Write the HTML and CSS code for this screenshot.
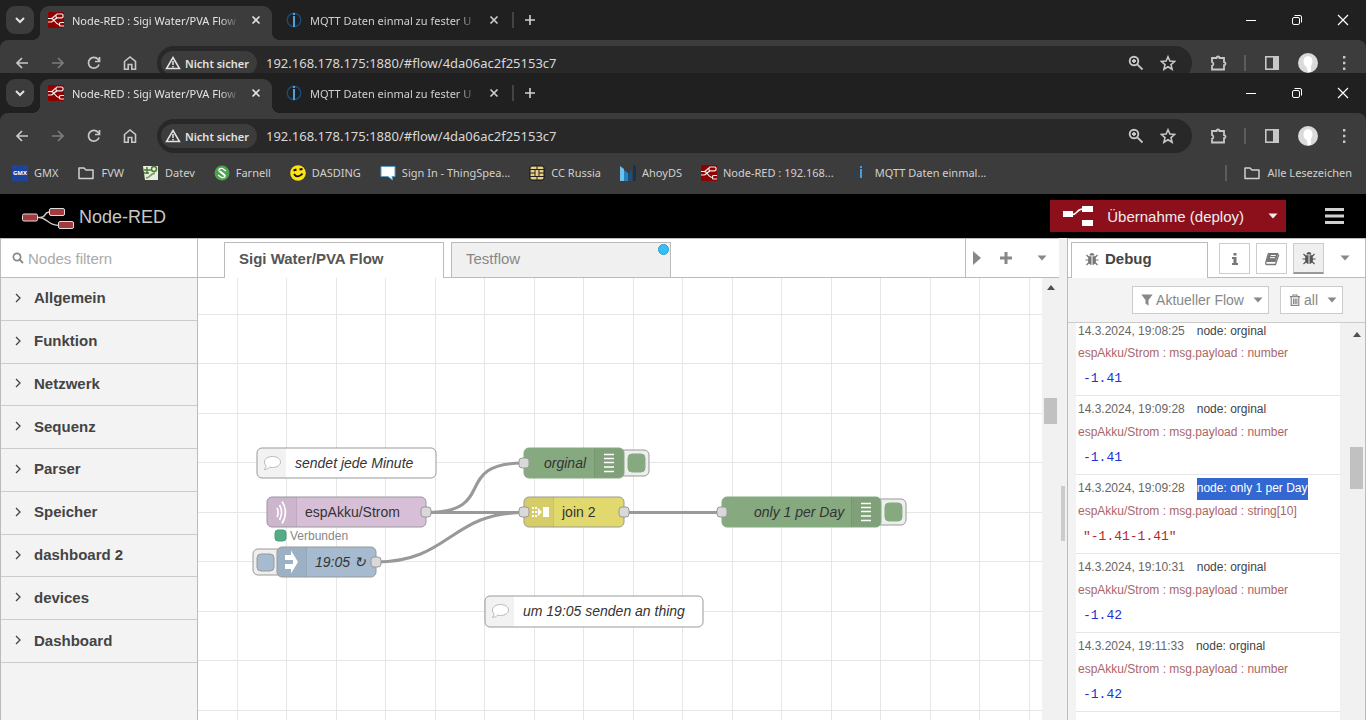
FILE: index.html
```html
<!DOCTYPE html>
<html lang="de">
<head>
    <meta charset="UTF-8">
    <meta name="viewport" content="width=device-width, initial-scale=1.0">
    <title>Node-RED : Sigi Water/PVA Flow</title>
    <link rel="stylesheet" href="styles.css">
</head>
<body>
    <!-- Icons -->
    <svg class="sprite" aria-hidden="true">
        <symbol id="i-down" viewBox="0 0 16 16"><path d="M4 6l4 4 4-4" fill="none" stroke="currentColor" stroke-width="2"/></symbol>
        <symbol id="i-close" viewBox="0 0 16 16"><path d="M4.500 4.500l7 7M11.500 4.500l-7 7" fill="none" stroke="currentColor" stroke-width="1.600"/></symbol>
        <symbol id="i-plus" viewBox="0 0 16 16"><path d="M8 3v10M3 8h10" fill="none" stroke="currentColor" stroke-width="1.600"/></symbol>
        <symbol id="i-nodered" viewBox="0 0 16 16"><rect width="16" height="16" rx="1" fill="#8f0000"/><path d="M0 6.500h3c3 0 2.500-3.500 6-3.500M3 6.500c4 0 4 6 8 6M0 10l3 0c2 0 3-3 6-3.800" fill="none" stroke="#eee" stroke-width="1.200"/><rect x="8" y="2" width="7" height="3.800" rx="1.200" fill="#8f0000" stroke="#eee" stroke-width="1.200"/><path d="M16 10.500h-3.500a1 1 0 0 0-1 1v1.500a1 1 0 0 0 1 1H16" fill="none" stroke="#eee" stroke-width="1.200"/></symbol>
        <symbol id="i-iobroker" viewBox="0 0 16 16"><circle cx="8" cy="8" r="6.800" fill="none" stroke="#1c4a78" stroke-width="1.400"/><rect x="7" y="4" width="2" height="11" fill="#4aa5df"/><rect x="7" y="1" width="2" height="2" fill="#4aa5df"/></symbol>
        <symbol id="i-back" viewBox="0 0 16 16"><path d="M14 8H3M8 3L3 8l5 5" fill="none" stroke="currentColor" stroke-width="1.700"/></symbol>
        <symbol id="i-forward" viewBox="0 0 16 16"><path d="M2 8h11M8 3l5 5-5 5" fill="none" stroke="currentColor" stroke-width="1.700"/></symbol>
        <symbol id="i-reload" viewBox="0 0 16 16"><path d="M13 9.500A5.400 5.400 0 1 1 12 4.300L13 5.500M13.500 2v4.500H9" fill="none" stroke="currentColor" stroke-width="1.700"/></symbol>
        <symbol id="i-home" viewBox="0 0 16 16"><path d="M2.500 6.500L8 2l5.500 4.500V14.200H9.800V9.500H6.200v4.700H2.500z" fill="none" stroke="currentColor" stroke-width="1.600"/></symbol>
        <symbol id="i-warn" viewBox="0 0 16 16"><path d="M8 2.500L14.500 13.500h-13z" fill="none" stroke="currentColor" stroke-width="1.500"/><path d="M8 6v4M8 11v1.500" stroke="currentColor" stroke-width="1.500"/></symbol>
        <symbol id="i-zoom" viewBox="0 0 16 16"><circle cx="6" cy="6" r="4.300" fill="none" stroke="currentColor" stroke-width="1.900"/><path d="M9.300 9.300L14.500 14.500M4 6h4M6 4v4" stroke="currentColor" stroke-width="1.800"/></symbol>
        <symbol id="i-star" viewBox="0 0 16 16"><path d="M8 1.800l1.900 4.300 4.700.4-3.600 3.100 1.100 4.600L8 11.700l-4.100 2.500L5 9.600 1.400 6.500l4.700-.4z" fill="none" stroke="currentColor" stroke-width="1.600"/></symbol>
        <symbol id="i-ext" viewBox="0 0 18 18"><path d="M3 4h4.500a1.500 1.500 0 0 1 3 0H15v4.200a1.500 1.500 0 0 1 0 3v4.300H3v-3.700a2 2 0 0 0 0-3.800z" fill="none" stroke="currentColor" stroke-width="1.800"/></symbol>
        <symbol id="i-panel" viewBox="0 0 16 16"><rect x="1.800" y="1.800" width="12.400" height="12.400" fill="none" stroke="currentColor" stroke-width="1.600"/><path d="M9 2h5v12H9z" fill="currentColor"/></symbol>
        <symbol id="i-avatar" viewBox="0 0 20 20"><circle cx="10" cy="10" r="10" fill="#dadada"/><ellipse cx="10" cy="8.500" rx="4.500" ry="5.500" fill="#fff"/><path d="M8 12h5l0 7-3 0z" fill="#fff"/></symbol>
        <symbol id="i-dots" viewBox="0 0 16 16"><path d="M7 1h2.400v2.400H7zM7 6.800h2.400v2.400H7zM7 12.600h2.400V15H7z" fill="currentColor"/></symbol>
        <symbol id="i-min" viewBox="0 0 12 12"><path d="M1 6.500h10" stroke="currentColor"/></symbol>
        <symbol id="i-restore" viewBox="0 0 12 12"><rect x="1.500" y="3.500" width="7" height="7" rx="1.500" fill="none" stroke="currentColor"/><path d="M3.500 1.500H9A1.500 1.500 0 0 1 10.500 3v5.500" fill="none" stroke="currentColor"/></symbol>
        <symbol id="i-x" viewBox="0 0 12 12"><path d="M1 1l10 10M11 1L1 11" stroke="currentColor" stroke-width="1.200"/></symbol>
        <symbol id="i-folder" viewBox="0 0 18 16"><path d="M2 3h5l2 2h7v8.500H2z" fill="none" stroke="currentColor" stroke-width="1.500" stroke-linejoin="round"/></symbol>
        <symbol id="i-caret" viewBox="0 0 10 10"><path d="M.5 2.500h9L5 7.500z" fill="currentColor"/></symbol>
        <symbol id="i-bug" viewBox="0 0 14 14"><path d="M4.500 3.500a2.500 2.500 0 0 1 5 0z" fill="currentColor"/><path d="M3.500 4.200h3V13C4.300 12.700 3 11 3 8.500zM7.500 4.200h3l.5 4.300c0 2.500-1.300 4.200-3.500 4.500z" fill="currentColor"/><path d="M4 5.500L1.500 3M10 5.500L12.500 3M.5 8h3M10.500 8h3M4 10.500L1.500 13M10 10.500L12.500 13" stroke="currentColor" stroke-width="1.200"/></symbol>
        <symbol id="i-info" viewBox="0 0 14 14"><path d="M5.500 1h3v2.500h-3zM4 5h4.500v6H10v2H4v-2h1.500V7H4z" fill="currentColor"/></symbol>
        <symbol id="i-book" viewBox="0 0 16 14"><path d="M5 1h9.500l-3 9H2.200z" fill="currentColor"/><path d="M4.500 1L1.800 10.500c-.4 1.400.2 2 1.200 2h8.500L14.800 2.500" fill="none" stroke="currentColor" stroke-width="1.300"/><path d="M6.700 3.500h5M6 5.700h5" stroke="#fff"/></symbol>
        <symbol id="i-filter" viewBox="0 0 12 12"><path d="M.3.500h11.400L7.500 6v5.700L4.500 9.500V6z" fill="currentColor"/></symbol>
        <symbol id="i-trash" viewBox="0 0 12 12"><path d="M.8 2.700h10.400M4 2.500V1h4v1.500M2.200 3v8.300h7.600V3M4.500 4.500V10M6.200 4.500V10M7.900 4.500V10" fill="none" stroke="currentColor" stroke-width="1.200"/></symbol>
        <symbol id="i-search" viewBox="0 0 12 12"><circle cx="5" cy="5" r="3.600" fill="none" stroke="currentColor" stroke-width="1.700"/><path d="M7.600 7.600L11 11" stroke="currentColor" stroke-width="2"/></symbol>
        <symbol id="i-angle" viewBox="0 0 10 10"><path d="M3 1l4 4-4 4" fill="none" stroke="currentColor" stroke-width="1.300"/></symbol>
        <symbol id="i-comment" viewBox="0 0 20 20"><path d="M10.500 3.500c4.600 0 8 2.400 8 5.500s-3.400 5.500-8 5.500c-1 0-2-.1-2.900-.4C6.300 15.600 4.500 16.300 2 16.500c1.300-1 2-2 2.100-3.500-1-1-1.600-2.400-1.600-4 0-3.100 3.400-5.500 8-5.500z" fill="#fff" stroke="#bbb"/></symbol>
        <symbol id="i-lines" viewBox="0 0 12 20"><path d="M1 1.500h10M1 5.500h10M1 9.500h10M1 14h10M1 18.500h10" stroke="#fff" stroke-width="1.500"/></symbol>
    </svg>

    <!-- Hinteres Browserfenster -->
    <div class="browser browser-back">
        <div class="tabstrip">
            <button class="tab-search" aria-label="Tabs durchsuchen"><svg width="16" height="16"><use href="#i-down"/></svg></button>
            <div class="tab active">
                <svg width="16" height="16"><use href="#i-nodered"/></svg>
                <span class="tab-title">Node-RED : Sigi Water/PVA Flow</span>
                <button class="tab-close" aria-label="Tab schließen"><svg width="16" height="16"><use href="#i-close"/></svg></button>
            </div>
            <div class="tab">
                <svg width="16" height="16"><use href="#i-iobroker"/></svg>
                <span class="tab-title">MQTT Daten einmal zu fester U</span>
                <button class="tab-close" aria-label="Tab schließen"><svg width="16" height="16"><use href="#i-close"/></svg></button>
            </div>
            <span class="tab-divider"></span>
            <button class="new-tab" aria-label="Neuer Tab"><svg width="16" height="16"><use href="#i-plus"/></svg></button>
            <div class="window-buttons">
                <button aria-label="Minimieren"><svg width="12" height="12"><use href="#i-min"/></svg></button>
                <button aria-label="Verkleinern"><svg width="12" height="12"><use href="#i-restore"/></svg></button>
                <button aria-label="Schließen"><svg width="12" height="12"><use href="#i-x"/></svg></button>
            </div>
        </div>
        <div class="toolbar">
            <button aria-label="Zurück"><svg width="16" height="16"><use href="#i-back"/></svg></button>
            <button class="dim" aria-label="Vorwärts"><svg width="16" height="16"><use href="#i-forward"/></svg></button>
            <button aria-label="Neu laden"><svg width="16" height="16"><use href="#i-reload"/></svg></button>
            <button aria-label="Startseite"><svg width="16" height="16"><use href="#i-home"/></svg></button>
            <div class="omnibox">
                <button class="chip"><svg width="16" height="16"><use href="#i-warn"/></svg>Nicht sicher</button>
                <input type="text" aria-label="Adresse" value="192.168.178.175:1880/#flow/4da06ac2f25153c7">
                <button class="omni-button" aria-label="Zoom"><svg width="16" height="16"><use href="#i-zoom"/></svg></button>
                <button class="omni-button" aria-label="Lesezeichen"><svg width="16" height="16"><use href="#i-star"/></svg></button>
            </div>
            <button aria-label="Erweiterungen"><svg width="18" height="18"><use href="#i-ext"/></svg></button>
            <span class="toolbar-divider"></span>
            <button aria-label="Seitenleiste"><svg width="16" height="16"><use href="#i-panel"/></svg></button>
            <button aria-label="Profil"><svg width="20" height="20"><use href="#i-avatar"/></svg></button>
            <button aria-label="Menü"><svg width="16" height="16"><use href="#i-dots"/></svg></button>
        </div>
    </div>

    <!-- Vorderes Browserfenster -->
    <div class="browser">
        <div class="tabstrip">
            <button class="tab-search" aria-label="Tabs durchsuchen"><svg width="16" height="16"><use href="#i-down"/></svg></button>
            <div class="tab active">
                <svg width="16" height="16"><use href="#i-nodered"/></svg>
                <span class="tab-title">Node-RED : Sigi Water/PVA Flow</span>
                <button class="tab-close" aria-label="Tab schließen"><svg width="16" height="16"><use href="#i-close"/></svg></button>
            </div>
            <div class="tab">
                <svg width="16" height="16"><use href="#i-iobroker"/></svg>
                <span class="tab-title">MQTT Daten einmal zu fester U</span>
                <button class="tab-close" aria-label="Tab schließen"><svg width="16" height="16"><use href="#i-close"/></svg></button>
            </div>
            <span class="tab-divider"></span>
            <button class="new-tab" aria-label="Neuer Tab"><svg width="16" height="16"><use href="#i-plus"/></svg></button>
            <div class="window-buttons">
                <button aria-label="Minimieren"><svg width="12" height="12"><use href="#i-min"/></svg></button>
                <button aria-label="Verkleinern"><svg width="12" height="12"><use href="#i-restore"/></svg></button>
                <button aria-label="Schließen"><svg width="12" height="12"><use href="#i-x"/></svg></button>
            </div>
        </div>
        <div class="toolbar">
            <button aria-label="Zurück"><svg width="16" height="16"><use href="#i-back"/></svg></button>
            <button class="dim" aria-label="Vorwärts"><svg width="16" height="16"><use href="#i-forward"/></svg></button>
            <button aria-label="Neu laden"><svg width="16" height="16"><use href="#i-reload"/></svg></button>
            <button aria-label="Startseite"><svg width="16" height="16"><use href="#i-home"/></svg></button>
            <div class="omnibox">
                <button class="chip"><svg width="16" height="16"><use href="#i-warn"/></svg>Nicht sicher</button>
                <input type="text" aria-label="Adresse" value="192.168.178.175:1880/#flow/4da06ac2f25153c7">
                <button class="omni-button" aria-label="Zoom"><svg width="16" height="16"><use href="#i-zoom"/></svg></button>
                <button class="omni-button" aria-label="Lesezeichen"><svg width="16" height="16"><use href="#i-star"/></svg></button>
            </div>
            <button aria-label="Erweiterungen"><svg width="18" height="18"><use href="#i-ext"/></svg></button>
            <span class="toolbar-divider"></span>
            <button aria-label="Seitenleiste"><svg width="16" height="16"><use href="#i-panel"/></svg></button>
            <button aria-label="Profil"><svg width="20" height="20"><use href="#i-avatar"/></svg></button>
            <button aria-label="Menü"><svg width="16" height="16"><use href="#i-dots"/></svg></button>
        </div>
        <nav class="bookmarks">
            <a href="#"><span class="gmx">GMX</span>GMX</a>
            <a href="#"><svg width="18" height="16"><use href="#i-folder"/></svg>FVW</a>
            <a href="#"><svg width="16" height="16" viewBox="0 0 16 16"><path d="M0 1h15v14H2z" fill="#e9eee2"/><path d="M1 5h7M4 2v7M1 8h5" stroke="#4c7a35" stroke-width="1.500"/><circle cx="11" cy="4" r="2.500" fill="none" stroke="#4c7a35" stroke-width="1.500"/><path d="M3 13c4 0 4-4 9-5" stroke="#7da565" stroke-width="2" fill="none"/></svg>Datev</a>
            <a href="#"><svg width="16" height="16" viewBox="0 0 16 16"><circle cx="8" cy="8" r="7.500" fill="#4da24f"/><path d="M12 6L8.500 3.500C5 3 4 5 5.500 6.500l5 4M4 10l3.500 2.500c3.500.5 4.500-1.500 3-3L6 6" fill="none" stroke="#fff" stroke-width="1.300"/></svg>Farnell</a>
            <a href="#"><svg width="16" height="16" viewBox="0 0 16 16"><circle cx="8" cy="8" r="7.800" fill="#ffe312"/><path d="M3.500 5.500l3-1M9.500 4.500l3-.5" stroke="#111" stroke-width="2"/><path d="M4 9c2 3.500 6 3 8.500-.5" fill="none" stroke="#111" stroke-width="1.800"/></svg>DASDING</a>
            <a href="#"><svg width="16" height="16" viewBox="0 0 16 16"><path d="M1 1.500h14v10h-3l.5 3.500-4.500-3.500H1z" fill="#fff" stroke="#5b9fc0"/></svg>Sign In - ThingSpea...</a>
            <a href="#"><svg width="16" height="16" viewBox="0 0 16 16"><rect x="1" y="1" width="14" height="14" rx="2" fill="#e6cf85" stroke="#111"/><path d="M1 4.500h5v7H1M15 4.500h-5v7h5M1 8h5M10 8h5M6 4.500h4M6 11.500h4M8 1v3.500M8 11.500V15" fill="none" stroke="#222"/></svg>CC Russia</a>
            <a href="#"><svg width="16" height="16" viewBox="0 0 16 16"><path d="M0 1l4 3v12H0z" fill="#6fc0ee"/><path d="M4 5l4 3v8H4z" fill="#2c7fb8"/><path d="M8 9l4-5v12H8z" fill="#17507d"/><path d="M13 0l3 1v15h-3z" fill="#123552"/></svg>AhoyDS</a>
            <a href="#"><svg width="16" height="16"><use href="#i-nodered"/></svg>Node-RED : 192.168...</a>
            <a href="#"><svg width="16" height="16" viewBox="0 0 16 16"><circle cx="8" cy="8" r="7" fill="none" stroke="#24425f"/><path d="M7 4h2v9H7zM7 1h2v2H7z" fill="#3f9fdf"/></svg>MQTT Daten einmal...</a>
            <a href="#" class="all-bookmarks"><svg width="18" height="16"><use href="#i-folder"/></svg>Alle Lesezeichen</a>
        </nav>
    </div>

    <!-- Node-RED -->
    <header class="red-header">
        <svg class="red-logo" width="54" height="22" viewBox="0 0 54 22">
            <path d="M16 9.500h3C26 9.500 22 4 29 4M18 9.500c8 0 9 8 20 8" fill="none" stroke="#ccc" stroke-width="1.500"/>
            <g fill="#a33a3e" stroke="#ddd"><rect x="1.500" y="6" width="15" height="7" rx="1.500"/><rect x="28.500" y=".5" width="15" height="7" rx="1.500"/><rect x="37.500" y="13.500" width="15" height="7" rx="1.500"/></g>
        </svg>
        <span class="red-name">Node-RED</span>
        <button class="deploy">
            <svg width="30" height="20" viewBox="0 0 30 20"><path d="M0 5h10v6H0zM19 0h11v6H19zM19 14h11v6H19z" fill="#fff"/><path d="M9 8.500c6 0 4-5.500 11-5.500" fill="none" stroke="#fff" stroke-width="1.500"/></svg>
            <span>Übernahme (deploy)</span>
            <svg class="deploy-caret" width="10" height="10"><use href="#i-caret"/></svg>
        </button>
        <button class="main-menu" aria-label="Hauptmenü"><svg width="19" height="16" viewBox="0 0 19 16"><path d="M0 1.500h19M0 8h19M0 14.500h19" stroke="#d0d0d0" stroke-width="3"/></svg></button>
    </header>

    <main class="editor">
        <aside class="palette">
            <div class="palette-search">
                <label for="filter"><svg width="12" height="12"><use href="#i-search"/></svg></label>
                <input id="filter" type="text" aria-label="Nodes filtern" placeholder="Nodes filtern">
            </div>
            <div class="categories">
                <button><svg width="10" height="10"><use href="#i-angle"/></svg>Allgemein</button>
                <button><svg width="10" height="10"><use href="#i-angle"/></svg>Funktion</button>
                <button><svg width="10" height="10"><use href="#i-angle"/></svg>Netzwerk</button>
                <button><svg width="10" height="10"><use href="#i-angle"/></svg>Sequenz</button>
                <button><svg width="10" height="10"><use href="#i-angle"/></svg>Parser</button>
                <button><svg width="10" height="10"><use href="#i-angle"/></svg>Speicher</button>
                <button><svg width="10" height="10"><use href="#i-angle"/></svg>dashboard 2</button>
                <button><svg width="10" height="10"><use href="#i-angle"/></svg>devices</button>
                <button><svg width="10" height="10"><use href="#i-angle"/></svg>Dashboard</button>
            </div>
        </aside>

        <section class="workspace">
            <div class="flow-tabs">
                <a href="#" class="flow-tab active">Sigi Water/PVA Flow</a>
                <a href="#" class="flow-tab">Testflow<span class="changed"></span></a>
                <div class="flow-buttons">
                    <button aria-label="Weiter"><svg width="8" height="14" viewBox="0 0 8 14"><path d="M0 0l8 7-8 7z" fill="currentColor"/></svg></button>
                    <button aria-label="Flow hinzufügen"><svg width="12" height="12" viewBox="0 0 12 12"><path d="M6 0v12M0 6h12" stroke="currentColor" stroke-width="3"/></svg></button>
                    <button aria-label="Flows anzeigen"><svg width="10" height="10"><use href="#i-caret"/></svg></button>
                </div>
            </div>
            <div class="canvas-row">
                <svg class="canvas">
                    <defs>
                        <pattern id="grid" x="39" y="36" width="99" height="99" patternUnits="userSpaceOnUse">
                            <path d="M.5 0v99M49.500 0v99M0 .5h99M0 49.500h99" stroke="#e6e6e6" fill="none"/>
                        </pattern>
                    </defs>
                    <rect width="100%" height="100%" fill="url(#grid)"/>

                    <!-- Verbindungen -->
                    <g class="wires">
                        <path d="M228 234.500C302 234.500 252 185 326 185"/>
                        <path d="M228 234.500H326"/>
                        <path d="M178 284C252 284 252 234.500 326 234.500"/>
                        <path d="M426 234.500H524"/>
                    </g>

                    <g class="node" transform="translate(59 170)">
                        <rect class="body" width="179" height="30" rx="5" fill="#fff"/>
                        <path d="M5 .5H29v29H5a4.500 4.500 0 0 1-4.500-4.500V5A4.500 4.500 0 0 1 5 .5z" fill="#000" fill-opacity=".05"/>
                        <use href="#i-comment" x="5" y="5" width="20" height="20"/>
                        <text class="italic" x="38" y="20">sendet jede Minute</text>
                    </g>

                    <g class="node" transform="translate(69 219)">
                        <rect class="body" width="159" height="30" rx="5" fill="#d8bfd8"/>
                        <path class="shade" d="M5 .5H29v29H5a4.500 4.500 0 0 1-4.500-4.500V5A4.500 4.500 0 0 1 5 .5z"/>
                        <path class="edge" d="M29.500 0v30"/>
                        <path d="M10 11c1.500 3 1.500 6 0 9M12.500 8c2.500 4.500 2.500 10.500 0 15M15 4.500c4.500 6.500 4.500 15 0 22" fill="none" stroke="#fff" stroke-width="1.700"/>
                        <text x="38" y="20">espAkku/Strom</text>
                        <rect class="port" x="154" y="10" width="10" height="10" rx="3"/>
                        <rect x="8" y="33" width="11" height="11" rx="3" fill="#5a8" stroke="#4b9c78"/>
                        <text class="status" x="23" y="43">Verbunden</text>
                    </g>

                    <g class="node" transform="translate(79 269)">
                        <path d="M1 2H-19a5 5 0 0 0-5 5V23a5 5 0 0 0 5 5H1" fill="#eee" stroke="#999"/>
                        <rect x="-20" y="7" width="17" height="17" rx="4" fill="#a6bbcf" stroke="#999"/>
                        <rect class="body" width="99" height="30" rx="5" fill="#a6bbcf"/>
                        <path class="shade" d="M5 .5H29v29H5a4.500 4.500 0 0 1-4.500-4.500V5A4.500 4.500 0 0 1 5 .5z"/>
                        <path class="edge" d="M29.500 0v30"/>
                        <path d="M8 8h6V3.500l7 11.500-7 11.500V22H8v-5h8v-4H8z" fill="#fff"/>
                        <text class="italic" x="38" y="20">19:05 ↻</text>
                        <rect class="port" x="94" y="10" width="10" height="10" rx="3"/>
                    </g>

                    <g class="node" transform="translate(326 170)">
                        <path d="M99 2h21a5 5 0 0 1 5 5V23a5 5 0 0 1-5 5H99" fill="#eee" stroke="#999"/>
                        <rect x="104" y="6" width="17" height="18" rx="4" fill="#87a980" stroke="#83ac83"/>
                        <rect class="body green" width="100" height="30" rx="5" fill="#87a980"/>
                        <path class="shade" d="M71 .5H95A4.500 4.500 0 0 1 99.500 5V25a4.500 4.500 0 0 1-4.500 4.500H71z"/>
                        <path class="edge" d="M70.500 0v30"/>
                        <use href="#i-lines" x="79" y="5" width="12" height="20"/>
                        <text class="italic" x="20" y="20">orginal</text>
                        <rect class="port" x="-5" y="10" width="10" height="10" rx="3"/>
                    </g>

                    <g class="node" transform="translate(326 219)">
                        <rect class="body" width="100" height="30" rx="5" fill="#e2d96e"/>
                        <path class="shade" d="M5 .5H29v29H5a4.500 4.500 0 0 1-4.500-4.500V5A4.500 4.500 0 0 1 5 .5z"/>
                        <path class="edge" d="M29.500 0v30"/>
                        <path d="M8 11h5M8 15h6M8 19h5" stroke="#fff" stroke-width="2" stroke-dasharray="2 1"/>
                        <path d="M14 11l4 4-4 4zM19 10h6v10h-6z" fill="#fff"/>
                        <text x="38" y="20">join 2</text>
                        <rect class="port" x="-5" y="10" width="10" height="10" rx="3"/>
                        <rect class="port" x="95" y="10" width="10" height="10" rx="3"/>
                    </g>

                    <g class="node" transform="translate(524 219)">
                        <path d="M158 2h21a5 5 0 0 1 5 5V23a5 5 0 0 1-5 5H158" fill="#eee" stroke="#999"/>
                        <rect x="163" y="6" width="17" height="18" rx="4" fill="#87a980" stroke="#83ac83"/>
                        <rect class="body green" width="159" height="30" rx="5" fill="#87a980"/>
                        <path class="shade" d="M130 .5H154a4.500 4.500 0 0 1 4.500 4.500V25a4.500 4.500 0 0 1-4.500 4.500H130z"/>
                        <path class="edge" d="M129.500 0v30"/>
                        <use href="#i-lines" x="138" y="5" width="12" height="20"/>
                        <text class="italic" x="32" y="20">only 1 per Day</text>
                        <rect class="port" x="-5" y="10" width="10" height="10" rx="3"/>
                    </g>

                    <g class="node" transform="translate(287 318)">
                        <rect class="body" width="218" height="31" rx="5" fill="#fff"/>
                        <path d="M5 .5H29v30H5a4.500 4.500 0 0 1-4.500-4.500V5A4.500 4.500 0 0 1 5 .5z" fill="#000" fill-opacity=".05"/>
                        <use href="#i-comment" x="5" y="5" width="20" height="20"/>
                        <text class="italic" x="38" y="20">um 19:05 senden an thing</text>
                    </g>
                </svg>
                <div class="canvas-scroll">
                    <svg width="8" height="5" viewBox="0 0 8 5"><path d="M4 0l4 5H0z" fill="#505050"/></svg>
                    <span class="thumb"></span>
                </div>
            </div>
        </section>

        <div class="separator"><span></span></div>

        <aside class="sidebar">
            <div class="side-tabs">
                <a href="#" class="side-tab"><svg width="14" height="14"><use href="#i-bug"/></svg>Debug</a>
                <div class="side-buttons">
                    <button aria-label="Info"><svg width="14" height="14"><use href="#i-info"/></svg></button>
                    <button aria-label="Hilfe"><svg width="16" height="14"><use href="#i-book"/></svg></button>
                    <button class="selected" aria-label="Debug"><svg width="14" height="14"><use href="#i-bug"/></svg></button>
                </div>
                <button class="side-menu" aria-label="Mehr"><svg width="10" height="10"><use href="#i-caret"/></svg></button>
            </div>
            <div class="side-toolbar">
                <button class="filter-button"><svg width="12" height="12"><use href="#i-filter"/></svg>Aktueller Flow<svg class="caret" width="10" height="10"><use href="#i-caret"/></svg></button>
                <button class="clear-button"><svg width="12" height="12"><use href="#i-trash"/></svg>all<svg class="caret" width="10" height="10"><use href="#i-caret"/></svg></button>
            </div>
            <div class="side-content">
                <div class="messages">
                    <div class="msg">
                        <div class="meta"><span class="date">14.3.2024, 19:08:25</span><a href="#">node: orginal</a></div>
                        <div class="topic">espAkku/Strom : msg.payload : number</div>
                        <div class="value number">-1.41</div>
                    </div>
                    <div class="msg">
                        <div class="meta"><span class="date">14.3.2024, 19:09:28</span><a href="#">node: orginal</a></div>
                        <div class="topic">espAkku/Strom : msg.payload : number</div>
                        <div class="value number">-1.41</div>
                    </div>
                    <div class="msg">
                        <div class="meta"><span class="date">14.3.2024, 19:09:28</span><a href="#" class="marked">node: only 1 per Day</a></div>
                        <div class="topic">espAkku/Strom : msg.payload : string[10]</div>
                        <div class="value string">"-1.41-1.41"</div>
                    </div>
                    <div class="msg">
                        <div class="meta"><span class="date">14.3.2024, 19:10:31</span><a href="#">node: orginal</a></div>
                        <div class="topic">espAkku/Strom : msg.payload : number</div>
                        <div class="value number">-1.42</div>
                    </div>
                    <div class="msg">
                        <div class="meta"><span class="date">14.3.2024, 19:11:33</span><a href="#">node: orginal</a></div>
                        <div class="topic">espAkku/Strom : msg.payload : number</div>
                        <div class="value number">-1.42</div>
                    </div>
                </div>
                <div class="side-scroll">
                    <svg width="8" height="5" viewBox="0 0 8 5"><path d="M4 0l4 5H0z" fill="#505050"/></svg>
                    <span class="thumb"></span>
                </div>
            </div>
        </aside>
    </main>
</body>
</html>
```
FILE: styles.css
```css
* {
    box-sizing: border-box;
}

body {
    margin: 0;
    height: 100vh;
    display: flex;
    flex-direction: column;
    overflow: hidden;
    font-family: "Liberation Sans", Arial, sans-serif;
    font-size: 14px;
    color: #555;
}

button {
    display: flex;
    align-items: center;
    justify-content: center;
    margin: 0;
    padding: 0;
    border: 0;
    background: none;
    color: inherit;
    font: inherit;
}

a {
    color: inherit;
    text-decoration: none;
}

svg {
    flex: none;
}

.sprite {
    position: absolute;
    width: 0;
    height: 0;
}

/* Browser */
.browser {
    flex: none;
    background-color: #202020;
    color: #d0d0d0;
    font-family: "Noto Sans", "Open Sans", sans-serif;
    font-size: 11px;
}

.browser-back {
    height: 73px;
    overflow: hidden;
}

.tabstrip {
    display: flex;
    height: 40px;
    padding-left: 6px;
    padding-top: 6px;
}

.tab-search {
    width: 28px;
    height: 28px;
    margin-right: 6px;
    border-radius: 9px;
    background-color: #3c3c3c;
    color: #e3e3e3;
}

.tab {
    position: relative;
    display: flex;
    align-items: center;
    gap: 8px;
    width: 232px;
    height: 34px;
    margin-right: 6px;
    padding: 0 8px 6px;
}

.tab.active {
    border-radius: 9px 9px 0 0;
    background-color: #3c3c3c;
    color: #e3e3e3;
}

/* geschwungene Ecken unten am aktiven Tab */
.tab.active::before,
.tab.active::after {
    content: "";
    position: absolute;
    bottom: 0;
    width: 8px;
    height: 8px;
}

.tab.active::before {
    left: -8px;
    background: radial-gradient(circle at 0 0, transparent 8px, #3c3c3c 8px);
}

.tab.active::after {
    right: -8px;
    background: radial-gradient(circle at 100% 0, transparent 8px, #3c3c3c 8px);
}

.tab-title {
    flex: 1;
    overflow: hidden;
    white-space: nowrap;
    -webkit-mask-image: linear-gradient(to right, #000 88%, transparent);
    mask-image: linear-gradient(to right, #000 88%, transparent);
}

.tab-divider {
    width: 2px;
    height: 16px;
    margin: 6px 8px 0 -4px;
    background-color: #444;
}

.new-tab {
    height: 28px;
    width: 16px;
}

.window-buttons {
    display: flex;
    height: 28px;
    margin-left: auto;
    color: #fff;
}

.window-buttons button {
    width: 46px;
}

.toolbar {
    display: flex;
    align-items: center;
    height: 46px;
    padding: 0 4px;
    border-radius: 8px 8px 0 0;
    background-color: #3c3c3c;
    color: #c7c7c7;
}

.toolbar > button {
    width: 36px;
    height: 34px;
}

.toolbar .dim {
    color: #7c7c7c;
}

.omnibox {
    flex: 1;
    display: flex;
    align-items: center;
    height: 34px;
    margin: 0 8px 0 9px;
    padding: 0 8px 0 4px;
    border-radius: 17px;
    background-color: #282828;
}

.chip {
    gap: 4px;
    height: 24px;
    padding: 0 8px 0 4px;
    border-radius: 12px;
    background-color: #3c3c3c;
    color: #e3e3e3;
    font-weight: 600;
}

.omnibox input {
    flex: 1;
    min-width: 0;
    padding: 0 9px;
    border: 0;
    outline: 0;
    background: none;
    color: #d8d8d8;
    font-family: inherit;
    font-size: 13px;
}

.omni-button {
    width: 32px;
    height: 32px;
}

.toolbar-divider {
    width: 2px;
    height: 16px;
    margin: 0 8px;
    background-color: #5c5c5c;
}

.bookmarks {
    display: flex;
    align-items: center;
    gap: 19px;
    height: 35px;
    padding: 0 14px 8px 12px;
    background-color: #3c3c3c;
    white-space: nowrap;
}

.bookmarks a {
    display: flex;
    align-items: center;
    gap: 6px;
}

.gmx {
    width: 16px;
    background-color: #1c449b;
    color: #fff;
    font-size: 6px;
    font-weight: 700;
    line-height: 16px;
    text-align: center;
}

.bookmarks .all-bookmarks {
    gap: 7px;
    margin-left: auto;
    padding-left: 16px;
    border-left: 2px solid #5c5c5c;
}

/* Kopfzeile */
.red-header {
    flex: none;
    display: flex;
    align-items: center;
    height: 44px;
    padding-left: 21px;
    background-color: #000;
    color: #c7c7c7;
}

.red-name {
    margin-left: 4px;
    font-size: 18px;
    padding-top: 2px;
}

.red-logo {
    margin-top: 6px;
}

.deploy {
    gap: 14px;
    height: 32px;
    margin-left: auto;
    padding: 0 8px 0 13px;
    background-color: #8c101c;
    color: #eee;
    font-size: 15px;
}

.deploy-caret {
    margin-left: 10px;
}

.main-menu {
    width: 80px;
    height: 40px;
    padding-left: 16px;
}

/* Editor */
.editor {
    flex: 1;
    display: flex;
    min-height: 0;
}

.palette {
    width: 198px;
    border: 1px solid #bbb;
    border-bottom: 0;
    background-color: #f3f3f3;
}

.palette-search {
    display: flex;
    align-items: center;
    gap: 4px;
    height: 39px;
    padding-left: 11px;
    border-bottom: 1px solid #bbb;
    background-color: #fff;
    color: #888;
}

.palette-search label {
    display: flex;
}

.palette-search input {
    width: 150px;
    padding: 0;
    border: 0;
    outline: 0;
    background: none;
    font-family: inherit;
    font-size: 15px;
}

.palette-search input::placeholder {
    color: #aaa;
}

.categories {
    display: grid;
    grid-template-rows: repeat(9, 1fr);
    height: 385px;
}

.categories button {
    justify-content: flex-start;
    gap: 11px;
    padding: 0 0 2px 12px;
    border-bottom: 1px solid #ccc;
    color: #444;
    font-size: 15px;
    font-weight: 700;
}

.workspace {
    flex: 1;
    display: flex;
    flex-direction: column;
    min-width: 0;
    border-top: 1px solid #bbb;
}

.flow-tabs {
    display: flex;
    align-items: flex-end;
    gap: 7px;
    height: 39px;
    padding-left: 26px;
    border-bottom: 1px solid #bbb;
}

.flow-tab {
    position: relative;
    width: 220px;
    height: 35px;
    padding-left: 14px;
    border: 1px solid #bbb;
    border-bottom: 0;
    background-color: #f0f0f0;
    color: #888;
    font-size: 15px;
    line-height: 32px;
}

.flow-tab.active {
    margin-bottom: -1px;
    height: 36px;
    background-color: #fff;
    color: #555;
    font-weight: 700;
}

.changed {
    position: absolute;
    top: 1px;
    right: 1px;
    width: 11px;
    height: 11px;
    border: 1px solid #2d9bc9;
    border-radius: 50%;
    background-color: #33c0f5;
}

.flow-buttons {
    display: grid;
    grid-template-columns: 22px 36px 35px;
    height: 38px;
    margin-left: auto;
    border-left: 1px solid #bbb;
    color: #888;
}

.canvas-row {
    flex: 1;
    display: flex;
    min-height: 0;
}

.canvas {
    flex: 1;
    min-width: 0;
    height: 100%;
    background-color: #fff;
}

.wires path {
    fill: none;
    stroke: #999;
    stroke-width: 3;
}

.node .body {
    stroke: #999;
}

.node .green {
    stroke: #83ac83;
}

.node .shade {
    fill: #000;
    fill-opacity: 0.05;
}

.node .edge {
    stroke: #000;
    stroke-opacity: 0.1;
}

.node .port {
    fill: #d9d9d9;
    stroke: #999;
}

.node text {
    fill: #333;
    font-size: 14px;
}

.node .italic {
    font-style: italic;
}

.node .status {
    fill: #888;
    font-size: 12px;
}

.canvas-scroll,
.side-scroll {
    display: flex;
    flex-direction: column;
    align-items: center;
    width: 17px;
    padding-top: 7px;
    background-color: #f1f1f1;
}

.thumb {
    width: 13px;
    height: 26px;
    margin-top: 108px;
    background-color: #c1c1c1;
}

.separator {
    display: flex;
    align-items: center;
    justify-content: center;
    width: 8px;
    padding-top: 68px;
    background-color: #f1f1f1;
}

.separator span {
    width: 4px;
    height: 55px;
    background-color: #ccc;
}

/* Seitenleiste */
.sidebar {
    display: flex;
    flex-direction: column;
    width: 299px;
    border: 1px solid #bbb;
    border-bottom: 0;
    background-color: #f3f3f3;
}

.side-tabs {
    flex: none;
    display: flex;
    align-items: flex-end;
    height: 39px;
    padding-left: 3px;
    border-bottom: 1px solid #bbb;
    background-color: #fff;
}

.side-tab {
    display: flex;
    align-items: center;
    gap: 6px;
    width: 137px;
    height: 36px;
    margin-bottom: -1px;
    padding: 0 13px 4px;
    border: 1px solid #bbb;
    border-bottom: 0;
    background-color: #fff;
    color: #444;
    font-size: 15px;
    font-weight: 700;
}

.side-tab svg {
    color: #777;
}

.side-buttons {
    display: flex;
    gap: 6px;
    margin-left: 11px;
    padding-bottom: 3px;
}

.side-buttons button {
    width: 31px;
    height: 31px;
    border: 1px solid #ccc;
    background-color: #fff;
    color: #777;
}

.side-buttons .selected {
    border-bottom: 2px solid #999;
    background-color: #efefef;
    color: #555;
}

.side-menu {
    flex: 1;
    height: 38px;
    color: #888;
}

.side-toolbar {
    flex: none;
    display: flex;
    align-items: center;
    justify-content: flex-end;
    gap: 11px;
    height: 45px;
    padding-right: 22px;
    border-bottom: 1px solid #ccc;
}

.side-toolbar button {
    gap: 3px;
    height: 28px;
    padding: 0 5px 0 8px;
    border: 1px solid #ccc;
    background-color: #fff;
    color: #888;
    font-size: 14px;
}

.side-toolbar .caret {
    margin-left: 6px;
}

.side-content {
    flex: 1;
    display: flex;
    min-height: 0;
    padding-left: 8px;
    overflow: hidden;
}

.messages {
    flex: 1;
    background-color: #fff;
    font-size: 12px;
}

.msg {
    padding: 5px 2px;
    border-bottom: 1px solid #e6e6e6;
}

.meta {
    display: flex;
    gap: 12px;
    line-height: 17px;
}

/* erste Meldung sitzt direkt unter der Leiste */
.msg:first-child {
    padding-top: 0;
}

.msg:first-child .meta {
    line-height: 16px;
}

.meta .date {
    color: #666;
}

.meta a {
    color: #444;
}

.meta .marked {
    height: 22px;
    margin: -2px 0 -3px;
    padding-top: 2px;
    background-color: #3367d1;
    color: #fff;
}

.topic {
    color: #a66;
    line-height: 28px;
}

.value {
    padding-left: 5px;
    font-family: "Liberation Mono", "Courier New", monospace;
    font-size: 13px;
    line-height: 23px;
}

.number {
    color: #2033d6;
}

.string {
    color: #b72828;
}

.side-scroll {
    width: 25px;
    padding-top: 9px;
    padding-left: 8px;
}

.side-scroll .thumb {
    height: 42px;
    margin-top: 110px;
}
```
